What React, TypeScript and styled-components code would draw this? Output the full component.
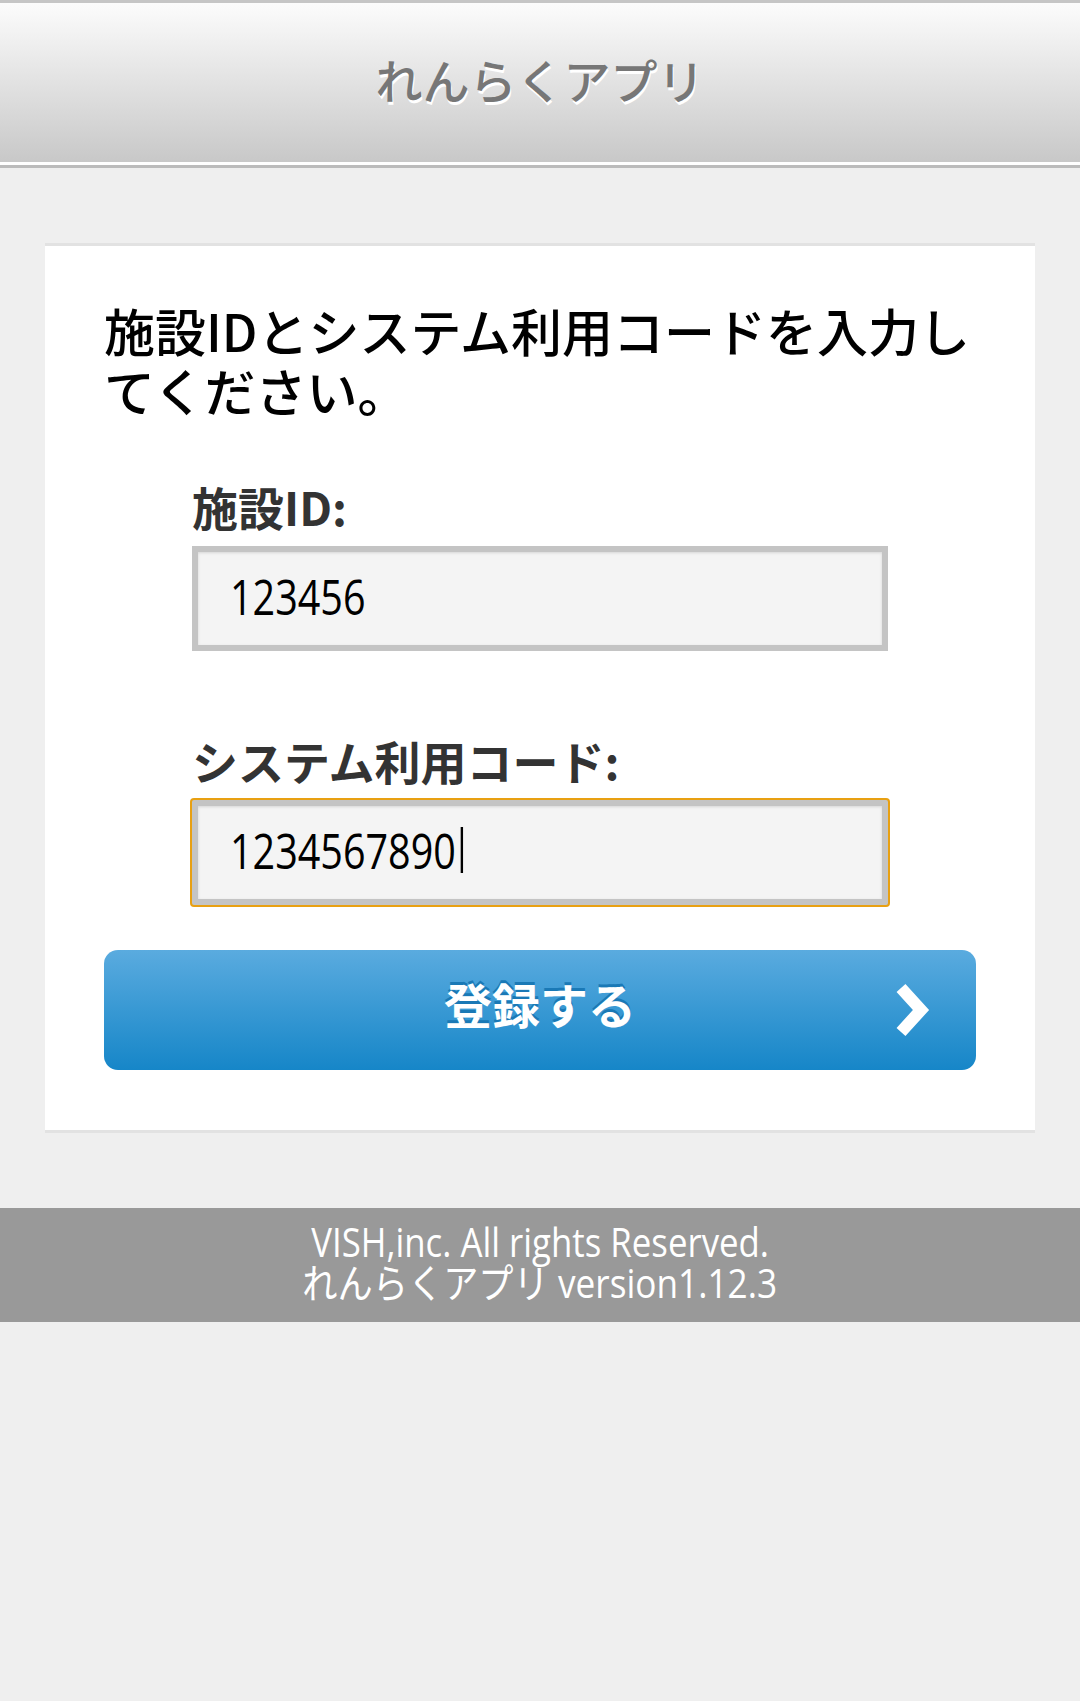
import React from "react";
import styled, { createGlobalStyle } from "styled-components";

const GlobalStyles = createGlobalStyle`
html, body {
    margin: 0;
    padding: 0;
    background: #efefef;
    font-family: "Noto Sans CJK JP", "Noto Sans", sans-serif;
}
`;

// the device font is a condensed sans; Open Sans squeezed sideways is close
const latin = `"Open Sans", "Noto Sans CJK JP", sans-serif`;

const HeaderWrap = styled.header`
    border-top: 3px solid #c6c6c6;
    border-bottom: 3px solid #bbbbbb;
`;

const TitleBar = styled.div`
    box-sizing: border-box;
    height: 162px;
    padding-bottom: 8px;
    display: flex;
    align-items: center;
    justify-content: center;
    background: linear-gradient(#fcfcfc, #c8c8c8);
    border-bottom: 3px solid #ffffff;
    h1 {
        margin: 0;
        font-size: 47px;
        font-weight: 500;
        color: #777777;
        text-shadow: 1px 3px 0 #ffffff;
    }
`;

const Main = styled.main`
    padding: 75px 45px 0;
`;

const Card = styled.section`
    background: #ffffff;
    border-top: 3px solid #e2e2e2;
    border-bottom: 3px solid #e2e2e2;
    padding: 54px 59px 60px;
`;

const Lead = styled.h2`
    margin: 0;
    font-size: 51px;
    line-height: 60px;
    font-weight: 500;
    color: #000000;
`;

const Form = styled.div`
    margin: 58px 88px 0;
    display: flex;
    flex-direction: column;
`;

const Label = styled.label<{ $first?: boolean }>`
    display: block;
    margin-top: ${(p) => (p.$first ? 0 : 81)}px;
    margin-bottom: 12px;
    font-size: 46px;
    line-height: 56px;
    font-weight: 700;
    color: #333333;
`;

const Field = styled.div<{ $focused?: boolean }>`
    box-sizing: border-box;
    height: 105px;
    display: flex;
    align-items: center;
    padding: 0 32px 6px;
    background: #f4f4f4;
    border: 6px solid #c4c4c4;
    border-radius: ${(p) => (p.$focused ? 2 : 0)}px;
    box-shadow: inset 0 1px 3px rgba(0, 0, 0, 0.12)
        ${(p) => (p.$focused ? ", 0 0 0 2px #e8a012" : "")};
    font-family: ${latin};
    font-size: 50px;
    color: #000000;
`;

const Squeezed = styled.span<{ $scale: number; $origin?: string }>`
    display: inline-flex;
    align-items: center;
    white-space: nowrap;
    transform: scaleX(${(p) => p.$scale});
    transform-origin: ${(p) => p.$origin || "left"} center;
`;

const Caret = styled.span`
    display: inline-block;
    width: 3px;
    height: 46px;
    margin-left: 6px;
    background: #000000;
`;

const SubmitButton = styled.button`
    box-sizing: border-box;
    width: 100%;
    height: 120px;
    margin-top: 45px;
    display: grid;
    grid-template-columns: 1fr auto 1fr;
    align-items: center;
    padding: 0;
    border: none;
    border-radius: 14px;
    background: linear-gradient(#5aabdf, #1686c8);
    color: #ffffff;
    font-family: "Noto Sans CJK JP", sans-serif;
    font-size: 48px;
    font-weight: 700;
    text-shadow: 0 -3px 0 #1a79b6;
    span {
        grid-column: 2;
        margin-bottom: 14px;
    }
    svg {
        grid-column: 3;
        justify-self: end;
        margin-right: 41px;
    }
`;

const Footer = styled.footer`
    margin-top: 75px;
    padding: 13px 0 19px;
    background: #999999;
    color: #ffffff;
    text-align: center;
    font-family: ${latin};
    font-size: 40px;
    line-height: 41px;
    p {
        margin: 0;
    }
`;

const Chevron = () => (
    <svg width="44" height="64" viewBox="0 0 44 64">
        <polyline
            points="10,10 30,32 10,54"
            fill="none"
            stroke="#ffffff"
            strokeWidth="12"
            strokeLinejoin="miter"
        />
    </svg>
);

export default function App() {
    return (
        <>
            <GlobalStyles />
            <HeaderWrap>
                <TitleBar>
                    <h1>れんらくアプリ</h1>
                </TitleBar>
            </HeaderWrap>
            <Main>
                <Card>
                    <Lead>施設IDとシステム利用コードを入力してください。</Lead>
                    <Form>
                        <Label $first>施設ID:</Label>
                        <Field>
                            <Squeezed $scale={0.79}>123456</Squeezed>
                        </Field>
                        <Label>システム利用コード:</Label>
                        <Field $focused>
                            <Squeezed $scale={0.79}>
                                1234567890
                                <Caret />
                            </Squeezed>
                        </Field>
                    </Form>
                    <SubmitButton type="button">
                        <span>登録する</span>
                        <Chevron />
                    </SubmitButton>
                </Card>
            </Main>
            <Footer>
                <p>
                    <Squeezed $scale={0.87} $origin="center">
                        VISH,inc. All rights Reserved.
                    </Squeezed>
                </p>
                <p>
                    <Squeezed $scale={0.88} $origin="center">
                        れんらくアプリ version1.12.3
                    </Squeezed>
                </p>
            </Footer>
        </>
    );
}
